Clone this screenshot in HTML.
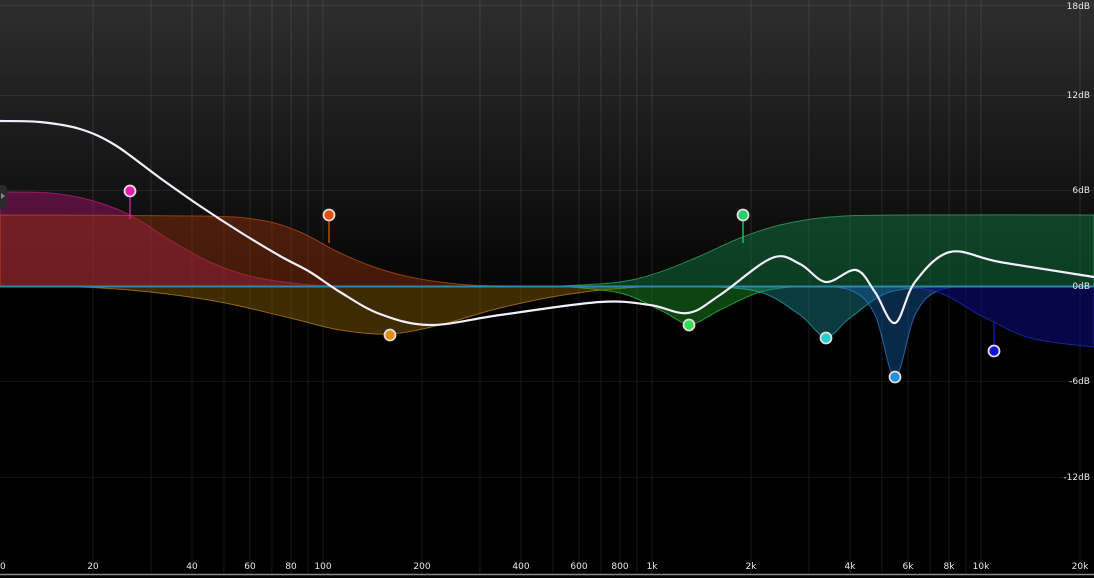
<!DOCTYPE html><html><head><style>
html,body{margin:0;padding:0;background:#000;width:1094px;height:578px;overflow:hidden}
svg{display:block}
text{font-family:"DejaVu Sans","Liberation Sans",sans-serif;font-size:9px;fill:#e8e8e8}
</style></head><body>
<svg id="s" width="1094" height="578" viewBox="0 0 1094 578">
<defs><linearGradient id="bg" x1="0" y1="0" x2="0" y2="1">
<stop offset="0" stop-color="#2e2e2e"/><stop offset="1" stop-color="#050505"/></linearGradient></defs>
<rect width="1094" height="286" fill="url(#bg)"/>
<g id="grid"></g>
<g id="fills"></g>
<line x1="0" y1="286.5" x2="1094" y2="286.5" stroke="#2a8aa8" stroke-width="2"/>
<path id="main" fill="none" stroke="#f2eefc" stroke-width="2.2"/>
<g id="nodes"></g>
<line x1="0" y1="574.5" x2="1094" y2="574.5" stroke="#8a8a8a" stroke-width="1.5"/>
<path d="M0 185 h3 a4 4 0 0 1 4 4 v16 a4 4 0 0 1 -4 4 h-3z" fill="#2a2a2a"/>
<path d="M1 193 l4 3 -4 3z" fill="#888"/>
<g text-anchor="end">
<text x="1090" y="9">18dB</text><text x="1090" y="98">12dB</text><text x="1090" y="193">6dB</text>
<text x="1090" y="289">0dB</text><text x="1090" y="384">-6dB</text><text x="1090" y="480">-12dB</text></g>
<g text-anchor="middle">
<text x="0" y="569">10</text><text x="93" y="569">20</text><text x="192" y="569">40</text><text x="250" y="569">60</text>
<text x="291" y="569">80</text><text x="323" y="569">100</text><text x="422" y="569">200</text><text x="521" y="569">400</text>
<text x="579" y="569">600</text><text x="620" y="569">800</text><text x="652" y="569">1k</text><text x="751" y="569">2k</text>
<text x="850" y="569">4k</text><text x="908" y="569">6k</text><text x="949" y="569">8k</text><text x="981" y="569">10k</text>
<text x="1080" y="569">20k</text></g>
</svg>
<script>
const NS="http://www.w3.org/2000/svg";
function el(t,a,p){const e=document.createElementNS(NS,t);for(const k in a)e.setAttribute(k,a[k]);document.getElementById(p).appendChild(e);return e;}
const X=f=>93+329*Math.log10(f/20);
[20,30,40,50,60,70,80,90,100,200,300,400,500,600,700,800,900,1000,2000,3000,4000,5000,6000,7000,8000,9000,10000,20000].forEach(f=>{const x=X(f);el("line",{x1:x,y1:0,x2:x,y2:574,stroke:"#ffffff",'stroke-opacity':0.08,'stroke-width':1.3},"grid")});
[5,95,190,381,477].forEach(y=>el("line",{x1:0,y1:y+.5,x2:1094,y2:y+.5,stroke:"#ffffff",'stroke-opacity':0.07},"grid"));
function cr(p){let d="M"+p[0][0]+" "+p[0][1];for(let i=0;i<p.length-1;i++){const a=p[Math.max(0,i-1)],b=p[i],c=p[i+1],e=p[Math.min(p.length-1,i+2)];
d+=` C${b[0]+(c[0]-a[0])/6} ${b[1]+(c[1]-a[1])/6} ${c[0]-(e[0]-b[0])/6} ${c[1]-(e[1]-b[1])/6} ${c[0]} ${c[1]}`;}return d;}
function band(pts,fill,stroke){const d=cr(pts)+` L${pts[pts.length-1][0]} 286 L${pts[0][0]} 286Z`;el("path",{d,fill,stroke,'stroke-width':1,'stroke-opacity':0.7},"fills");}
band([[0,192],[50,193],[90,200],[130,215],[170,240],[210,262],[250,276],[300,284],[340,286]],"rgba(170,20,110,0.45)","#c02080");
band([[0,215],[200,216],[260,220],[300,232],[340,253],[380,269],[420,279],[470,285],[520,286]],"rgba(150,50,10,0.45)","#c05010");
band([[0,286],[80,287],[150,292],[220,302],[290,318],[340,330],[390,334],[440,325],[500,308],[570,294],[640,287],[700,286]],"rgba(140,95,0,0.45)","#c08a10");
band([[560,286],[620,282],[660,272],[700,256],[740,238],[780,225],[830,217],[900,215],[1094,215]],"rgba(20,130,70,0.45)","#30b070");
band([[560,286],[620,293],[660,310],[690,324],[720,310],[760,292],[800,286]],"rgba(30,150,40,0.45)","#30c040");
band([[700,286],[760,292],[800,315],[826,337],[850,318],[890,292],[950,286]],"rgba(20,130,140,0.45)","#30b0b0");
band([[800,286],[850,290],[875,315],[895,377],[915,315],[940,290],[990,286]],"rgba(20,90,160,0.45)","#3080d0");
band([[850,286],[930,290],[980,315],[1030,338],[1094,347]],"rgba(10,10,120,0.6)","#2030c0");
document.getElementById("main").setAttribute("d",cr([[0,121],[40,122],[80,129],[115,145],[160,178],[200,206],[240,232],[280,256],[310,272],[340,292],[380,314],[430,325],[500,315],[600,302],[650,305],[688,313],[720,295],[772,258],[800,264],[826,282],[856,270],[875,292],[895,323],[915,282],[950,252],[1000,262],[1094,277]]));
[[130,191,"#e020b0",1],[329,215,"#e05010",1],[390,335,"#e09010",0],[743,215,"#20d070",1],[689,325,"#30e050",0],[826,338,"#20d0d0",0],[895,377,"#2090e0",0],[994,351,"#1010e0",1]].forEach(([x,y,c,s])=>{
if(s)el("line",{x1:x,y1:y,x2:x,y2:y>286?y-28:y+28,stroke:c,'stroke-width':1.3},"nodes");
el("circle",{cx:x,cy:y,r:5.5,fill:c,stroke:"#e8dcd8",'stroke-width':1.8},"nodes");});
</script>
</body></html>
